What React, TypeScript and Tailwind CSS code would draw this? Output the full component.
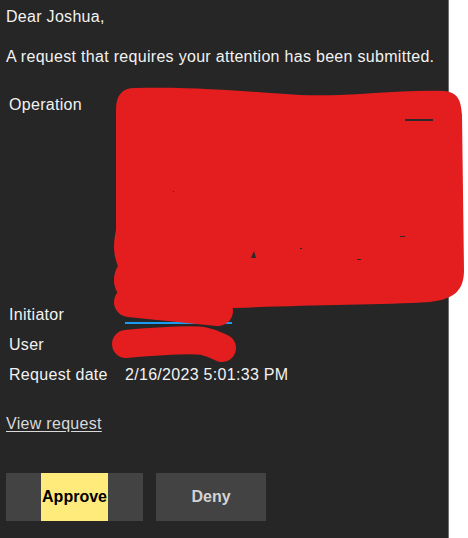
import React from "react";

const rows = [
  { label: "Initiator", value: <div className="w-[107px] h-[2px] mt-[16px] bg-[#1a9cf5]" /> },
  { label: "User", value: null },
  { label: "Request date", value: "2/16/2023 5:01:33 PM" },
];

// red marker scribbles that hide the private details
const Redaction = () => {
  return (
    <svg className="absolute inset-0 pointer-events-none" width="468" height="538" viewBox="0 0 468 538">
      <g fill="#e41d1f" stroke="#e41d1f" strokeLinecap="round" strokeLinejoin="round">
        <path
          stroke="none"
          d="M135 88 C200 86 260 93 300 95 C350 97 400 89 445 91 C458 93 461 100 462 115 L464 270 C464 290 455 299 430 302 C380 305 300 305 235 308 L130 300 C112 298 111 276 118 266 C112 252 114 240 116 230 L116 110 C116 95 122 88 135 88 Z"
        />
        <path fill="none" strokeWidth="30" d="M129 302 L218 311" />
        <path fill="none" strokeWidth="28" d="M126 344 C160 341 190 339 203 341 C213 343 218 346 222 348" />
      </g>
      <g fill="#2a2a2a">
        <rect x="405" y="119" width="28" height="2" />
        <path d="M251 258 L254 251 L256 258 Z" />
        <rect x="300" y="248" width="2" height="1" />
        <rect x="400" y="236" width="5" height="1" />
        <rect x="357" y="259" width="4" height="1" />
        <rect x="173" y="191" width="1" height="1" />
      </g>
    </svg>
  );
};

const App = () => {
  return (
    <div className="relative flex w-[468px] h-[538px] bg-white overflow-hidden font-['Liberation_Sans',Arial,sans-serif] text-[16px] leading-[18px]">
      <div className="w-[449px] h-full bg-[#262626] border-r border-[#6f6f6f] pl-[6px] pt-[8px] text-[#f2f2f2] tracking-[0.3px]">
        <p>Dear Joshua,</p>
        <p className="mt-[22px]">A request that requires your attention has been submitted.</p>

        {/* Details table */}
        <div className="mt-[24px] ml-[3px] flex flex-col">
          <div className="flex h-[210px] pt-[6px]">
            <div className="w-[116px]">Operation</div>
            <div className="flex-1" />
          </div>
          {rows.map(({ label, value }, i) => (
            <div key={i} className="flex h-[30px] items-center">
              <div className="w-[116px]">{label}</div>
              <div className="flex-1">{value}</div>
            </div>
          ))}
        </div>

        <a href="#" className="block w-fit mt-[25px] text-[#d9d9d9] underline underline-offset-2">
          View request
        </a>

        {/* Actions */}
        <div className="mt-[40px] flex gap-[13px] font-bold tracking-normal">
          <button className="flex w-[137px] h-[48px] justify-center bg-[#434343]">
            <span className="flex h-full items-center px-[1px] bg-[#ffeb7c] text-black">Approve</span>
          </button>
          <button className="flex w-[110px] h-[48px] items-center justify-center bg-[#434343] text-[#d4d4d4]">
            Deny
          </button>
        </div>
      </div>
      <Redaction />
    </div>
  );
};

export default App;
